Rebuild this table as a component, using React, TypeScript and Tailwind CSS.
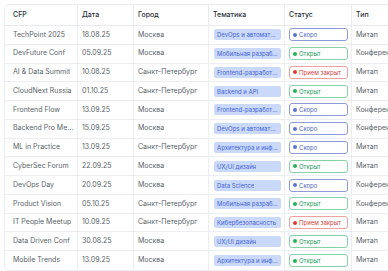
import React from "react";

type Status = "soon" | "open" | "closed";
const rows: [string, string, string, string, Status, string][] = [
  ["TechPoint 2025", "18.08.25", "Москва", "DevOps и автоматизация", "soon", "Митап"],
  ["DevFuture Conf", "05.09.25", "Москва", "Мобильная разработка", "open", "Конференция"],
  ["AI & Data Summit", "10.08.25", "Санкт-Петербург", "Frontend-разработка", "closed", "Митап"],
  ["CloudNext Russia", "01.10.25", "Санкт-Петербург", "Backend и API", "open", "Митап"],
  ["Frontend Flow", "13.09.25", "Москва", "Frontend-разработка", "soon", "Конференция"],
  ["Backend Pro Meetup", "15.09.25", "Москва", "DevOps и автоматизация", "soon", "Конференция"],
  ["ML in Practice", "13.09.25", "Санкт-Петербург", "Архитектура и инфраструктура", "soon", "Митап"],
  ["CyberSec Forum", "22.09.25", "Москва", "UX/UI дизайн", "open", "Митап"],
  ["DevOps Day", "20.09.25", "Москва", "Data Science", "soon", "Конференция"],
  ["Product Vision", "05.10.25", "Санкт-Петербург", "Мобильная разработка", "open", "Конференция"],
  ["IT People Meetup", "10.09.25", "Санкт-Петербург", "Кибербезопасность", "closed", "Митап"],
  ["Data Driven Conf", "30.08.25", "Москва", "UX/UI дизайн", "open", "Митап"],
  ["Mobile Trends", "13.09.25", "Москва", "Архитектура и инфраструктура", "open", "Митап"],
];

function StatusBadge({ s }: { s: Status }) {
  if (s === "soon")
    return (
      <div className="flex h-[13px] w-[59px] items-center gap-[2px] rounded-[3px] border border-[#8e9bd8] bg-white pl-[3px] text-[6px] text-[#5163c4]">
        <span className="h-[4px] w-[4px] shrink-0 rounded-full bg-[#5b72d9]" />
        <span>Скоро</span>
      </div>
    );
  if (s === "open")
    return (
      <div className="flex h-[13px] w-[59px] items-center gap-[2px] rounded-[3px] border border-[#86d2a6] bg-white pl-[3px] text-[6px] text-[#23995a]">
        <span className="h-[4px] w-[4px] shrink-0 rounded-full bg-[#22b455]" />
        <span>Открыт</span>
      </div>
    );
  return (
    <div className="flex h-[13px] w-[59px] items-center gap-[2px] rounded-[3px] border border-[#eea0a0] bg-white pl-[3px] text-[6px] text-[#d43d3d]">
      <span className="h-[4px] w-[4px] shrink-0 rounded-full bg-[#e53935]" />
      <span className="whitespace-nowrap">Прием закрыт</span>
    </div>
  );
}

export default function App() {
  return (
    <div
      className="h-[271px] w-[388px] overflow-hidden bg-white"
      style={{ fontFamily: "Inter, 'Noto Sans', sans-serif" }}
    >
      <div className="ml-[4px] mt-[4px] w-[440px] overflow-hidden rounded-[6px] border border-[#ebedf0] bg-white">
        <div className="flex h-[21px] items-center border-b border-[#e8eaed] text-[7px] font-medium text-[#2a2f38]">
          <div className="flex h-full w-[73px] items-center border-r border-[#e8eaed] pl-[8px]">CFP</div>
          <div className="flex h-full w-[56px] items-center border-r border-[#e8eaed] pl-[4px]">Дата</div>
          <div className="flex h-full w-[75px] items-center border-r border-[#e8eaed] pl-[4px]">Город</div>
          <div className="flex h-full w-[76px] items-center border-r border-[#e8eaed] pl-[4px]">Тематика</div>
          <div className="flex h-full w-[67px] items-center border-r border-[#e8eaed] pl-[4px]">Статус</div>
          <div className="flex h-full flex-1 items-center pl-[4px]">Тип</div>
        </div>
        {rows.map((r, i) => (
          <div
            key={i}
            className={`flex h-[18.77px] items-center text-[7px] text-[#5a5f67] ${i < rows.length - 1 ? "border-b border-[#eceef1]" : ""}`}
          >
            <div className="flex h-full w-[73px] min-w-0 items-center border-r border-[#eceef1] pl-[8px] pr-[3px]">
              <span className="block min-w-0 truncate">{r[0]}</span>
            </div>
            <div className="flex h-full w-[56px] items-center border-r border-[#eceef1] pl-[4px]">{r[1]}</div>
            <div className="flex h-full w-[75px] items-center whitespace-nowrap border-r border-[#eceef1] pl-[4px]">{r[2]}</div>
            <div className="flex h-full w-[76px] items-center border-r border-[#eceef1] pl-[5px]">
              <div className="flex h-[11px] w-[67px] min-w-0 items-center rounded-[2px] bg-[#cad9fa] px-[3px] text-[6px] text-[#3f63d8]">
                <span className="block min-w-0 truncate">{r[3]}</span>
              </div>
            </div>
            <div className="flex h-full w-[67px] items-center border-r border-[#eceef1] pl-[4px]">
              <StatusBadge s={r[4]} />
            </div>
            <div className="flex h-full flex-1 items-center whitespace-nowrap pl-[4px]">{r[5]}</div>
          </div>
        ))}
      </div>
    </div>
  );
}
